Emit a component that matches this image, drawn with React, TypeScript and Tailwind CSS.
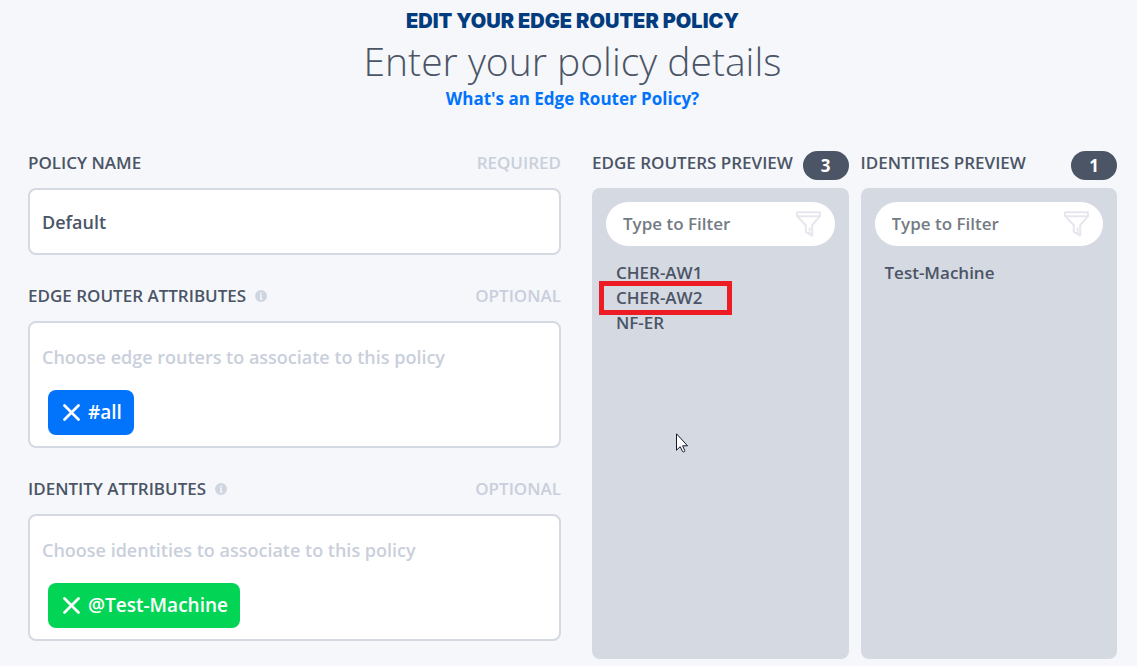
import { useState } from "react";

type Attribute = {
  id: string;
  label: string;
  placeholder: string;
  tag: string;
  tagClass: string;
};

const ATTRIBUTES: Attribute[] = [
  {
    id: "router-attributes",
    label: "EDGE ROUTER ATTRIBUTES",
    placeholder: "Choose edge routers to associate to this policy",
    tag: "#all",
    tagClass: "bg-[#0273fb]",
  },
  {
    id: "identity-attributes",
    label: "IDENTITY ATTRIBUTES",
    placeholder: "Choose identities to associate to this policy",
    tag: "@Test-Machine",
    tagClass: "bg-[#02d555]",
  },
];

const ROUTERS = ["CHER-AW1", "CHER-AW2", "NF-ER"];
const IDENTITIES = ["Test-Machine"];

function InfoIcon() {
  return (
    <svg className="w-3 h-3" viewBox="0 0 12 12" aria-hidden="true">
      <circle cx="6" cy="6" r="6" fill="#d0d6e0" />
      <path d="M6 2.4v1.5M5 5.2h1v3.6M4.9 9h2.4" stroke="#f5f7fb" strokeWidth="1.4" fill="none" />
    </svg>
  );
}

function CloseIcon() {
  return (
    <svg className="w-[17px] h-[17px]" viewBox="0 0 17 17" aria-hidden="true">
      <path d="M1.5 1.5l14 14M15.5 1.5l-14 14" stroke="#fff" strokeWidth="2.7" strokeLinecap="round" />
    </svg>
  );
}

function FunnelIcon() {
  return (
    <svg className="w-[25px] h-[26px] shrink-0" viewBox="0 0 25 26" fill="none" stroke="#e6e6ee" strokeWidth="2" strokeLinejoin="round" strokeLinecap="round" aria-hidden="true">
      <path d="M1 1.2h23v3.2c0 .6-.2 1-.6 1.4l-7.2 8.4v10.4l-6.4-3.8v-6.6L1.7 5.8C1.2 5.4 1 5 1 4.4z" />
      <path d="M1.4 5.2h22.2M13.6 17.4v2M13.6 21.6v.2" />
    </svg>
  );
}

function Pointer() {
  return (
    <svg className="absolute left-[84px] top-[245px] w-3 h-5" viewBox="0 0 12 20" aria-hidden="true">
      <path d="M.5.8v16.4l3.7-3.5 2.4 4.9c.6.8 2.4.2 2.2-.9l-2.2-4.9h4.9z" fill="#fff" stroke="#14172b" strokeWidth="1" />
    </svg>
  );
}

function AttributeField({ id, label, placeholder, tag, tagClass }: Attribute) {
  const [tags, setTags] = useState([tag]);

  return (
    <div>
      <div className="mb-[13px] flex items-center justify-between leading-6">
        <div className="flex items-center gap-[9px]">
          <label htmlFor={id}>{label}</label>
          <InfoIcon />
        </div>
        <span className="text-[#c9cfdb]">OPTIONAL</span>
      </div>
      <div className="min-h-[127px] rounded-lg border-2 border-[#d4d9e2] bg-white pt-4 pb-[11px]">
        <input
          id={id}
          type="text"
          placeholder={placeholder}
          className="block h-9 w-full bg-transparent px-3 text-lg outline-none placeholder:text-[#c9cfdb]"
        />
        <div className="mt-[15px] flex gap-2 px-[18px]">
          {tags.map((name) => (
            <button
              key={name}
              type="button"
              onClick={() => setTags(tags.filter((t) => t !== name))}
              className={`flex h-[45px] items-center gap-2 rounded-lg pl-[15px] pr-3 text-[19px] text-white ${tagClass}`}
            >
              <CloseIcon />
              {name}
            </button>
          ))}
        </div>
      </div>
    </div>
  );
}

function Preview({ title, items, marked, pointer }: { title: string; items: string[]; marked?: string; pointer?: boolean }) {
  const [filter, setFilter] = useState("");
  const shown = items.filter((item) => item.toLowerCase().includes(filter.toLowerCase()));

  return (
    <section className="flex min-w-0 flex-col">
      <div className="mb-2 flex items-start justify-between">
        <h2 className="whitespace-nowrap leading-6">{title}</h2>
        <span className="flex h-[29px] w-[46px] shrink-0 items-center justify-center rounded-full bg-[#4b5566] font-bold text-white">
          {items.length}
        </span>
      </div>
      <div className="relative min-h-[471px] flex-1 rounded-lg bg-[#d5d9e2] p-[14px]">
        <div className="flex h-11 items-center rounded-full bg-white pl-[17px] pr-[14px]">
          <input
            type="text"
            aria-label={`Filter ${title.toLowerCase()}`}
            placeholder="Type to Filter"
            value={filter}
            onChange={(e) => setFilter(e.target.value)}
            className="min-w-0 flex-1 bg-transparent outline-none placeholder:text-[#757b84]"
          />
          <FunnelIcon />
        </div>
        <ul className="mt-[14px] px-[10px] leading-[25px]">
          {shown.map((item) => (
            <li key={item} className="relative">
              {item}
              {item === marked && (
                <span className="absolute -left-[17px] -top-1 h-[34px] w-[133px] border-[5px] border-[#ed1c24]" />
              )}
            </li>
          ))}
        </ul>
        {pointer && <Pointer />}
      </div>
    </section>
  );
}

export default function App() {
  const [name, setName] = useState("Default");

  return (
    <main className="min-h-screen bg-[#f5f7fb] pt-2 pr-5 pb-[7px] pl-7 font-['Open_Sans',sans-serif] text-[17px] font-semibold text-[#4b5566]">
      <header className="mb-[41px] flex flex-col items-center text-center">
        <p className="font-['Inter',sans-serif] text-[20px] leading-[26px] font-black text-[#023c7f]">
          EDIT YOUR EDGE ROUTER POLICY
        </p>
        <h1 className="text-[39px] leading-[54px] font-light">Enter your policy details</h1>
        <a href="#" className="leading-[22px] font-bold text-[#0273fb]">
          What's an Edge Router Policy?
        </a>
      </header>

      <div className="grid grid-cols-[minmax(0,533fr)_minmax(0,525fr)] gap-[31px]">
        <form className="flex flex-col gap-[29px]">
          <div>
            <div className="mb-[13px] flex items-center justify-between leading-6">
              <label htmlFor="policy-name">POLICY NAME</label>
              <span className="text-[#c9cfdb]">REQUIRED</span>
            </div>
            <input
              id="policy-name"
              type="text"
              value={name}
              onChange={(e) => setName(e.target.value)}
              className="block h-[67px] w-full rounded-lg border-2 border-[#d4d9e2] bg-white px-3 text-lg outline-none"
            />
          </div>
          {ATTRIBUTES.map((attribute) => (
            <AttributeField key={attribute.id} {...attribute} />
          ))}
        </form>

        <div className="grid grid-cols-2 gap-3">
          <Preview title="EDGE ROUTERS PREVIEW" items={ROUTERS} marked="CHER-AW2" pointer />
          <Preview title="IDENTITIES PREVIEW" items={IDENTITIES} />
        </div>
      </div>
    </main>
  );
}
